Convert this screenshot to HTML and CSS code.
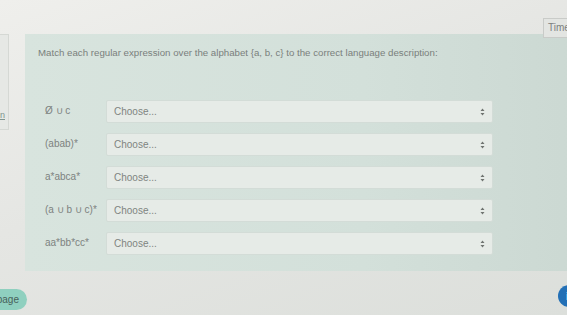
FILE: index.html
```html
<!DOCTYPE html>
<html>
<head>
<meta charset="utf-8">
<link rel="stylesheet" href="styles.css">
</head>
<body>
<div class="page">
  <div class="timer">Time</div>
  <div class="main">
    <aside class="side"><a class="side-link" href="#">on</a></aside>
    <section class="panel">
      <p class="question">Match each regular expression over the alphabet {a, b, c} to the correct language description:</p>
      <div class="rows">
        <div class="row">
          <div class="label">Ø ∪ c</div>
          <div class="select"><span>Choose...</span><svg class="arrows" width="5" height="8" viewBox="0 0 5 8"><path d="M2.5 0.5 L4.5 3 L0.5 3 Z M2.5 7.5 L4.5 5 L0.5 5 Z" fill="#6f7370"/></svg></div>
        </div>
        <div class="row">
          <div class="label">(abab)*</div>
          <div class="select"><span>Choose...</span><svg class="arrows" width="5" height="8" viewBox="0 0 5 8"><path d="M2.5 0.5 L4.5 3 L0.5 3 Z M2.5 7.5 L4.5 5 L0.5 5 Z" fill="#6f7370"/></svg></div>
        </div>
        <div class="row">
          <div class="label">a*abca*</div>
          <div class="select"><span>Choose...</span><svg class="arrows" width="5" height="8" viewBox="0 0 5 8"><path d="M2.5 0.5 L4.5 3 L0.5 3 Z M2.5 7.5 L4.5 5 L0.5 5 Z" fill="#6f7370"/></svg></div>
        </div>
        <div class="row">
          <div class="label">(a ∪ b ∪ c)*</div>
          <div class="select"><span>Choose...</span><svg class="arrows" width="5" height="8" viewBox="0 0 5 8"><path d="M2.5 0.5 L4.5 3 L0.5 3 Z M2.5 7.5 L4.5 5 L0.5 5 Z" fill="#6f7370"/></svg></div>
        </div>
        <div class="row">
          <div class="label">aa*bb*cc*</div>
          <div class="select"><span>Choose...</span><svg class="arrows" width="5" height="8" viewBox="0 0 5 8"><path d="M2.5 0.5 L4.5 3 L0.5 3 Z M2.5 7.5 L4.5 5 L0.5 5 Z" fill="#6f7370"/></svg></div>
        </div>
      </div>
    </section>
  </div>
  <div class="footer">
    <button class="page-btn">Next page</button>
  </div>
  <div class="help"><span>i</span></div>
</div>
</body>
</html>
```
FILE: styles.css
```css
html, body {
  margin: 0;
  padding: 0;
}
body {
  width: 567px;
  height: 315px;
  overflow: hidden;
  font-family: "Liberation Sans", Arial, sans-serif;
  background: linear-gradient(160deg, #efefec 0%, #e5e6e3 45%, #dcdfdb 100%);
  color: #7e8380;
}
.page {
  position: relative;
  width: 567px;
  height: 315px;
  padding-top: 34px;
  box-sizing: border-box;
}
.timer {
  position: absolute;
  top: 18px;
  left: 543px;
  width: 40px;
  height: 20px;
  box-sizing: border-box;
  border: 1px solid #c9cbc8;
  background: #e3e5e2;
  font-size: 10px;
  line-height: 18px;
  padding-left: 4px;
  color: #7c807e;
  z-index: 2;
}
.main {
  display: flex;
  align-items: flex-start;
  gap: 16px;
  margin-left: -50px;
  width: 640px;
}
.side {
  width: 59px;
  height: 96px;
  box-sizing: border-box;
  border: 1px solid #d5d8d4;
  background: #e6e8e5;
  display: flex;
  align-items: flex-end;
  justify-content: flex-end;
  padding: 0 3px 9px 0;
}
.side-link {
  font-size: 9px;
  color: #7f9590;
  text-decoration: underline;
}
.panel {
  flex: 1;
  background: linear-gradient(90deg, #d8e4de 0%, #d3e0da 60%, #cbd8d2 100%);
  padding: 13px 0 16px 13px;
}
.question {
  margin: 0;
  font-size: 9.7px;
  line-height: 12px;
  color: #7a7f7c;
}
.rows {
  margin-top: 41px;
  margin-left: 7px;
  display: flex;
  flex-direction: column;
  gap: 10px;
}
.row {
  display: flex;
  align-items: center;
}
.label {
  width: 61px;
  font-size: 10px;
  color: #7d827f;
  padding-bottom: 2px;
}
.select {
  width: 387px;
  height: 23px;
  box-sizing: border-box;
  background: #e6ebe7;
  border: 1px solid #d3dcd7;
  border-radius: 2px;
  display: flex;
  align-items: center;
  justify-content: space-between;
  padding: 0 7px 0 7px;
  font-size: 10px;
  color: #808481;
}
.arrows {
  display: block;
}
.footer {
  margin-top: 18px;
}
.page-btn {
  margin-left: -40px;
  width: 67px;
  height: 21px;
  border: none;
  border-radius: 11px;
  background: #8fd0bf;
  color: #47605a;
  font-family: "Liberation Sans", Arial, sans-serif;
  font-size: 10px;
  text-align: right;
  padding: 0 8px 0 0;
}
.help {
  position: absolute;
  left: 558px;
  top: 285px;
  width: 22px;
  height: 22px;
  border-radius: 50%;
  background: #2370b6;
  color: #ffffff;
  font-size: 11px;
  font-weight: bold;
  line-height: 22px;
  text-indent: 8px;
}
```
